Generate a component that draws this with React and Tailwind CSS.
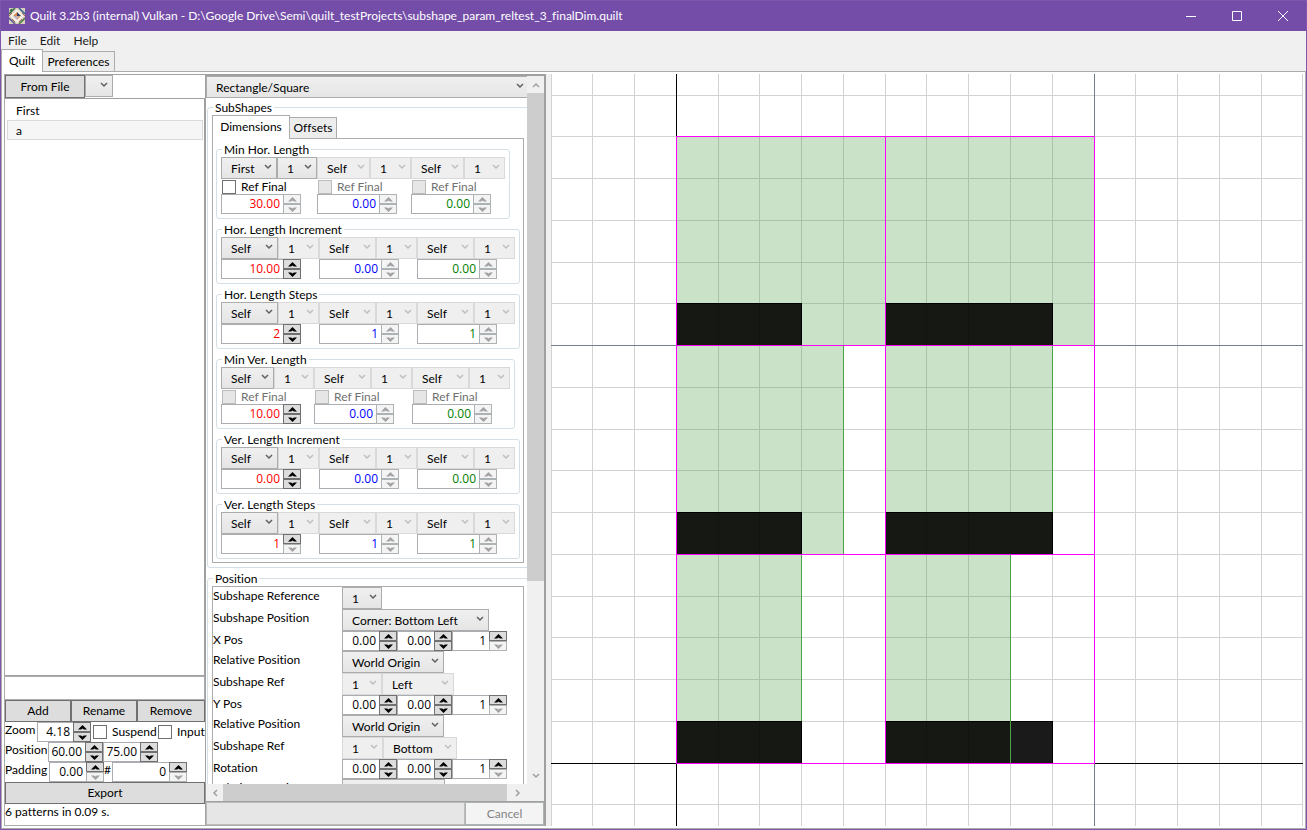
import React from "react";

const Chevron = ({ className = "", d = "M1 1l3 3 3-3" }) => (
  <svg viewBox="0 0 8 6" className={"h-[6px] w-[8px] " + className} fill="none" stroke="currentColor" strokeWidth="1.5">
    <path d={d} />
  </svg>
);

function Combo({ value, label, width, disabled, className = "" }) {
  return (
    <div className={"relative h-[22px] shrink-0 " + width + " " + className}>
      <select
        aria-label={label}
        disabled={disabled}
        className={
          "block h-full w-full appearance-none border pl-[9px] leading-[19px] text-black opacity-100 outline-none " +
          (disabled ? "border-[#d9d9d9] bg-[#efefef]" : "border-[#acacac] bg-gradient-to-b from-[#f0f0f0] to-[#e5e5e5]")
        }
      >
        <option>{value}</option>
      </select>
      <Chevron className={"pointer-events-none absolute right-[5px] top-[7px] " + (disabled ? "text-[#bfbfbf]" : "text-[#606060]")} />
    </div>
  );
}

function StepButton({ up, off, label }) {
  return (
    <button
      type="button"
      aria-label={label}
      disabled={off}
      className={
        "flex h-[10px] w-[18px] items-center justify-center border " +
        (off ? "border-[#adb2b5] bg-[#f4f4f4] text-[#a3a3a3]" : "border-[#707070] bg-[#dddddd] text-black")
      }
    >
      <svg viewBox="0 0 9 5" className="h-[5px] w-[9px]" fill="currentColor">
        <path d={up ? "M4.5 0L9 4.6H5.8L4.5 3.4 3.2 4.6H0z" : "M4.5 5L9 .4H5.8L4.5 1.6 3.2 .4H0z"} />
      </svg>
    </button>
  );
}

function Spinner({ value, label, width = "w-[80px]", color = "text-black", up = true, down = true }) {
  return (
    <div className={"flex h-[20px] shrink-0 border border-[#abadb3] bg-white " + width}>
      <input
        aria-label={label}
        defaultValue={value}
        className={"min-w-0 flex-1 bg-transparent pr-[3px] text-right font-['Open_Sans','Noto_Sans',sans-serif] leading-[18px] outline-none " + color}
      />
      <div className="-my-px -mr-px flex shrink-0 flex-col">
        <StepButton up off={!up} label={label + " up"} />
        <StepButton off={!down} label={label + " down"} />
      </div>
    </div>
  );
}

function Check({ text, disabled }) {
  return (
    <label className={"flex items-center gap-[5px] whitespace-nowrap " + (disabled ? "text-[#707070]" : "text-black")}>
      <input
        type="checkbox"
        disabled={disabled}
        className={"size-[14px] shrink-0 appearance-none border " + (disabled ? "border-[#bcbcbc] bg-[#e6e6e6]" : "border-[#707070] bg-white")}
      />
      {text}
    </label>
  );
}

const WIDE = [
  { a: "w-[57px]", b: "w-[41px]", col: "w-[98px]" },
  { a: "w-[57px]", b: "w-[41px]", col: "w-[98px]" },
  { a: "w-[57px]", b: "w-[41px]", col: "w-[98px]" },
];
const FIRST = [
  { a: "w-[56px]", b: "w-[40px]", col: "w-[96px]" },
  { a: "w-[53px]", b: "w-[41px]", col: "w-[94px]" },
  { a: "w-[53px]", b: "w-[41px]", col: "w-[94px]" },
];
const VERT = [
  { a: "w-[53px]", b: "w-[40px]", col: "w-[93px]" },
  { a: "w-[57px]", b: "w-[41px]", col: "w-[98px]" },
  { a: "w-[57px]", b: "w-[41px]", col: "w-[98px]" },
];
const COLORS = ["text-[#ff0000]", "text-[#0000ff]", "text-[#008000]"];

const GROUPS = [
  { title: "Min Hor. Length", cols: FIRST, first: "First", ref: [true, false, false], values: ["30.00", "0.00", "0.00"], up: false, down: false, oneOn: true },
  { title: "Hor. Length Increment", cols: WIDE, first: "Self", values: ["10.00", "0.00", "0.00"], up: true, down: true },
  { title: "Hor. Length Steps", cols: WIDE, first: "Self", values: ["2", "1", "1"], up: true, down: true },
  { title: "Min Ver. Length", cols: VERT, first: "Self", ref: [false, false, false], values: ["10.00", "0.00", "0.00"], up: true, down: true },
  { title: "Ver. Length Increment", cols: WIDE, first: "Self", values: ["0.00", "0.00", "0.00"], up: true, down: true },
  { title: "Ver. Length Steps", cols: WIDE, first: "Self", values: ["1", "1", "1"], up: true, down: false },
];

function DimensionGroup({ g }) {
  return (
    <fieldset className="w-fit min-w-0 rounded-[3px] border border-[#d5dfe5] px-[4px] pb-[4px]">
      <legend className="ml-[1px] h-[15px] px-[2px] leading-[15px]">{g.title}</legend>
      <div className="flex">
        {g.cols.map((c, i) => (
          <div key={i} className={c.col}>
            <div className="flex">
              <Combo value={i === 0 ? g.first : "Self"} label={g.title + " source " + (i + 1)} width={c.a} disabled={i > 0} />
              <Combo value="1" label={g.title + " index " + (i + 1)} width={c.b} disabled={!(i === 0 && g.oneOn)} />
            </div>
            {g.ref && (
              <div className="flex h-[15px] items-center pl-[1px]">
                <Check text="Ref Final" disabled={!g.ref[i]} />
              </div>
            )}
            <Spinner value={g.values[i]} label={g.title + " " + (i + 1)} color={COLORS[i]} up={i === 0 && g.up} down={i === 0 && g.down} />
          </div>
        ))}
      </div>
    </fieldset>
  );
}

function PosRow({ label, children }) {
  return (
    <div className="flex items-start">
      <div className="w-[129px] shrink-0 whitespace-nowrap leading-[18px]">{label}</div>
      {children}
    </div>
  );
}

const Triple = ({ name }) => (
  <>
    <Spinner value="0.00" label={name + " start"} width="w-[55px]" />
    <Spinner value="0.00" label={name + " increment"} width="w-[55px]" />
    <Spinner value="1" label={name + " steps"} width="w-[55px]" down={false} />
  </>
);

const XS = [0, 41, 83, 125, 167, 208, 250, 292, 334, 375, 417, 459, 501, 543, 584, 626, 668, 710, 751];
const YS = [21, 62, 104, 146, 188, 229, 271, 313, 355, 396, 438, 480, 522, 563, 605, 647, 689, 730];

function Viewport() {
  return (
    <svg className="block h-full w-full bg-white" shapeRendering="crispEdges" role="img" aria-label="Pattern preview">
      <g fill="#d3d3d3">
        {XS.map((x) => <rect key={x} x={x} y="0" width="1" height="100%" />)}
        {YS.map((y) => <rect key={y} x="0" y={y} width="100%" height="1" />)}
      </g>
      <rect x="543" y="0" width="1" height="100%" fill="#708090" />
      <rect x="0" y="271" width="100%" height="1" fill="#708090" />
      <rect x="125" y="0" width="1" height="100%" fill="#000" />
      <rect x="0" y="689" width="100%" height="1" fill="#000" />
      <g fill="#3b9433" fillOpacity="0.27">
        <rect x="125" y="62" width="418" height="209" />
        <rect x="125" y="271" width="167" height="209" />
        <rect x="334" y="271" width="167" height="209" />
        <rect x="125" y="480" width="125" height="209" />
        <rect x="334" y="480" width="125" height="209" />
      </g>
      <g fill="#4aa346">
        <rect x="292" y="271" width="1" height="209" />
        <rect x="501" y="271" width="1" height="209" />
        <rect x="250" y="480" width="1" height="209" />
      </g>
      {[229, 438, 647].map((y) => (
        <g key={y}>
          <rect x="125" y={y} width="126" height="42" fill="#000" />
          <rect x="125" y={y + 1} width="125" height="41" fill="#161814" />
          <rect x="334" y={y} width="168" height="42" fill="#000" />
          <rect x="334" y={y + 1} width="167" height="41" fill="#161814" />
          {[167, 208, 375, 417].map((x) => (
            <rect key={x} x={x} y={y + 1} width="1" height="41" fill="#121411" />
          ))}
        </g>
      ))}
      <rect x="459" y="648" width="42" height="41" fill="#1a1a1a" />
      <rect x="459" y="480" width="1" height="209" fill="#4aa346" />
      <g fill="#ff00ff">
        {[125, 334, 543].map((x) => <rect key={x} x={x} y="62" width="1" height="628" />)}
        {[62, 271, 480, 689].map((y) => <rect key={y} x="125" y={y} width="419" height="1" />)}
      </g>
    </svg>
  );
}

const Logo = () => (
  <svg viewBox="0 0 16 16" className="size-[16px]" aria-hidden="true">
    <rect width="16" height="16" fill="#d9cfc0" />
    <path d="M0 6L6 0M1 3L3 1" stroke="#3f7048" strokeWidth="1.6" />
    <path d="M10 0l6 6" stroke="#35698c" strokeWidth="1.6" />
    <path d="M0 10l6 6" stroke="#5b5e8e" strokeWidth="1.6" />
    <path d="M16 10l-6 6" stroke="#4d7e43" strokeWidth="1.6" />
    <path d="M0 8l3-3M13 5l3 3M3 11l3 3M10 14l3-3" stroke="#a44b3c" strokeWidth="0.8" />
    <path d="M8 1l7 7-7 7-7-7z" fill="#f5f0e8" />
    <path d="M8 4l4 4H8z" fill="#34405f" />
    <path d="M4 8l4-4v4z" fill="#dc8a4e" />
    <path d="M4 8h4v4z" fill="#b7b3c4" />
    <path d="M8 8h4l-4 4z" fill="#d9a98c" />
  </svg>
);

const plainButton = "h-[22px] border border-[#707070] bg-[#dddddd] leading-[20px]";

export default function App() {
  return (
    <div className="flex min-h-screen flex-col border border-t-0 border-[#7e57ad] bg-[#f0f0f0] font-['Lato','Open_Sans',sans-serif] text-[12px] leading-[16px] text-black [font-variant-ligatures:none]">
      <header className="flex h-[31px] shrink-0 items-center border-t border-[#7e57ad] bg-[#744da9] pl-[8px] text-white">
        <Logo />
        <h1 className="ml-[5px] flex-1 whitespace-nowrap">
          Quilt 3.2b3 (internal) Vulkan - D:\Google Drive\Semi\quilt_testProjects\subshape_param_reltest_3_finalDim.quilt
        </h1>
        {[
          ["Minimize", "M0 5.5h10"],
          ["Maximize", "M.5.5h9v9h-9z"],
          ["Close", "M0 0l10 10M10 0L0 10"],
        ].map(([name, d]) => (
          <button key={name} type="button" aria-label={name} className="flex h-full w-[46px] items-center justify-center">
            <svg viewBox="0 0 10 10" className="size-[10px] overflow-visible" fill="none" stroke="#fff">
              <path d={d} />
            </svg>
          </button>
        ))}
      </header>

      <nav className="flex h-[19px] shrink-0 items-center gap-[13px] pl-[7px] text-[#1a1a1a]">
        <button type="button">File</button>
        <button type="button">Edit</button>
        <button type="button">Help</button>
      </nav>

      <div className="z-10 flex h-[21px] shrink-0 items-end" role="tablist">
        <button type="button" role="tab" aria-selected="true" className="-mb-px h-[23px] w-[42px] border border-b-0 border-[#acacac] bg-white">
          Quilt
        </button>
        <button type="button" role="tab" aria-selected="false" className="-ml-px h-[20px] w-[73px] border border-b-0 border-[#acacac] bg-[#ededed]">
          Preferences
        </button>
      </div>

      <main className="flex min-h-0 flex-1 border border-[#acacac] bg-white p-[2px]">
        <section className="flex w-[201px] shrink-0 flex-col border border-r-0 border-[#acacac] border-t-[#a0a0a0]">
          <div className="flex h-[23px] shrink-0 items-start">
            <button type="button" className="h-[23px] w-[80px] border border-[#707070] bg-[#dddddd]">From File</button>
            <Combo value="" label="Source" width="w-[28px]" />
          </div>
          <ul className="flex flex-1 flex-col border border-l-0 border-[#a0a0a0] pl-[2px] pr-[1px] pt-[1px]">
            <li className="h-[20px] px-[9px] leading-[22px]">First</li>
            <li className="h-[20px] border border-[#dadada] bg-[#f6f6f6] px-[8px] leading-[20px]">a</li>
          </ul>
          <input aria-label="Pattern name" className="h-[24px] w-full shrink-0 border border-l-0 border-[#abadb3] bg-white px-1 outline-none" />
          <div className="flex">
            <button type="button" className={plainButton + " w-[66px]"}>Add</button>
            <button type="button" className={plainButton + " w-[66px]"}>Rename</button>
            <button type="button" className={plainButton + " flex-1"}>Remove</button>
          </div>
          <div className="flex h-[20px]">
            <span className="w-[32px] shrink-0">Zoom</span>
            <Spinner value="4.18" label="Zoom" width="w-[54px]" />
            <div className="ml-[2px] flex items-center">
              <div className="w-[65px]"><Check text="Suspend" /></div>
              <Check text="Input" />
            </div>
          </div>
          <div className="flex h-[20px]">
            <span className="w-[43px] shrink-0">Position</span>
            <Spinner value="60.00" label="Position X" width="w-[55px]" />
            <Spinner value="75.00" label="Position Y" width="w-[55px]" />
          </div>
          <div className="flex h-[20px]">
            <span className="w-[44px] shrink-0">Padding</span>
            <Spinner value="0.00" label="Padding" width="w-[55px]" down={false} />
            <span className="w-[8px] shrink-0">#</span>
            <Spinner value="0" label="Count" width="w-[75px]" down={false} />
          </div>
          <button type="button" className={plainButton + " w-full"}>Export</button>
          <p className="h-[21px] leading-[16px]">6 patterns in 0.09 s.</p>
        </section>

        <section className="flex w-[341px] shrink-0 flex-col border-2 border-b border-l border-[#a0a0a0] border-b-[#acacac]">
          <div className="flex h-[708px] shrink-0 grow">
            <div className="h-0 min-h-full w-[321px] shrink-0 overflow-hidden">
              <Combo value="Rectangle/Square" label="Shape" width="w-[323px]" />
              <fieldset className="ml-[1px] mt-[2px] w-[340px] rounded-[3px] border border-[#d5dfe5] px-[4px] pb-[4px]">
                <legend className="ml-[1px] h-[15px] px-[2px] leading-[15px]">SubShapes</legend>
                <div className="relative z-10 flex h-[23px] items-end" role="tablist">
                  <button type="button" role="tab" aria-selected="true" className="-mb-px h-[24px] w-[78px] border border-b-0 border-[#acacac] bg-white pb-[2px]">
                    Dimensions
                  </button>
                  <button type="button" role="tab" aria-selected="false" className="-ml-px h-[21px] w-[48px] border border-b-0 border-[#acacac] bg-[#ededed]">
                    Offsets
                  </button>
                </div>
                <div className="flex w-[312px] flex-col gap-[3px] border border-[#acacac] p-[3px]">
                  {GROUPS.map((g) => <DimensionGroup key={g.title} g={g} />)}
                </div>
              </fieldset>
              <fieldset className="ml-[1px] mt-[3px] w-[340px] rounded-[3px] border border-[#d5dfe5] px-[4px] pb-[4px]">
                <legend className="ml-[1px] h-[15px] px-[2px] leading-[15px]">Position</legend>
                <div className="w-[312px] border border-[#acacac]">
                  <PosRow label="Subshape Reference"><Combo value="1" label="Subshape Reference" width="w-[40px]" /></PosRow>
                  <PosRow label="Subshape Position"><Combo value="Corner: Bottom Left" label="Subshape Position" width="w-[147px]" /></PosRow>
                  <PosRow label="X Pos"><Triple name="X Pos" /></PosRow>
                  <PosRow label="Relative Position"><Combo value="World Origin" label="X Relative Position" width="w-[102px]" /></PosRow>
                  <PosRow label="Subshape Ref">
                    <Combo value="1" label="X Subshape Ref" width="w-[40px]" disabled />
                    <Combo value="Left" label="X Edge" width="w-[72px]" disabled />
                  </PosRow>
                  <PosRow label="Y Pos"><Triple name="Y Pos" /></PosRow>
                  <PosRow label="Relative Position"><Combo value="World Origin" label="Y Relative Position" width="w-[102px]" /></PosRow>
                  <PosRow label="Subshape Ref">
                    <Combo value="1" label="Y Subshape Ref" width="w-[41px]" disabled />
                    <Combo value="Bottom" label="Y Edge" width="w-[74px]" disabled />
                  </PosRow>
                  <PosRow label="Rotation"><Triple name="Rotation" /></PosRow>
                  <PosRow label="Relative Rotation"><Combo value="World Origin" label="Relative Rotation" width="w-[103px]" /></PosRow>
                </div>
              </fieldset>
            </div>
            <div className="flex w-[17px] shrink-0 flex-col bg-[#f0f0f0] text-[#a0a0a0]">
              <button type="button" aria-label="Scroll up" className="flex h-[17px] items-center justify-center"><Chevron d="M1 5l3-3 3 3" /></button>
              <div className="h-[488px] bg-[#cdcdcd]" />
              <div className="flex-1" />
              <button type="button" aria-label="Scroll down" className="flex h-[17px] items-center justify-center"><Chevron /></button>
            </div>
          </div>
          <div className="flex h-[17px] shrink-0 bg-[#f0f0f0] pr-[15px] text-[#a0a0a0]">
            <button type="button" aria-label="Scroll left" className="flex w-[17px] items-center justify-center"><Chevron className="rotate-90" /></button>
            <div className="flex-1 bg-[#cdcdcd]" />
            <button type="button" aria-label="Scroll right" className="flex w-[22px] items-center justify-center"><Chevron className="-rotate-90" /></button>
          </div>
          <div className="flex h-[24px] shrink-0 border-t border-[#a0a0a0]">
            <div className="flex-1 border border-[#bcbcbc] bg-[#e6e6e6]" role="progressbar" aria-label="Progress" />
            <button type="button" disabled className="w-[79px] border border-[#adb2b5] bg-[#f4f4f4] text-[#838383]">Cancel</button>
          </div>
        </section>

        <div className="w-[5px] shrink-0 bg-[#f0f0f0]" />
        <section className="h-[752px] min-w-0 grow">
          <Viewport />
        </section>
      </main>
    </div>
  );
}
